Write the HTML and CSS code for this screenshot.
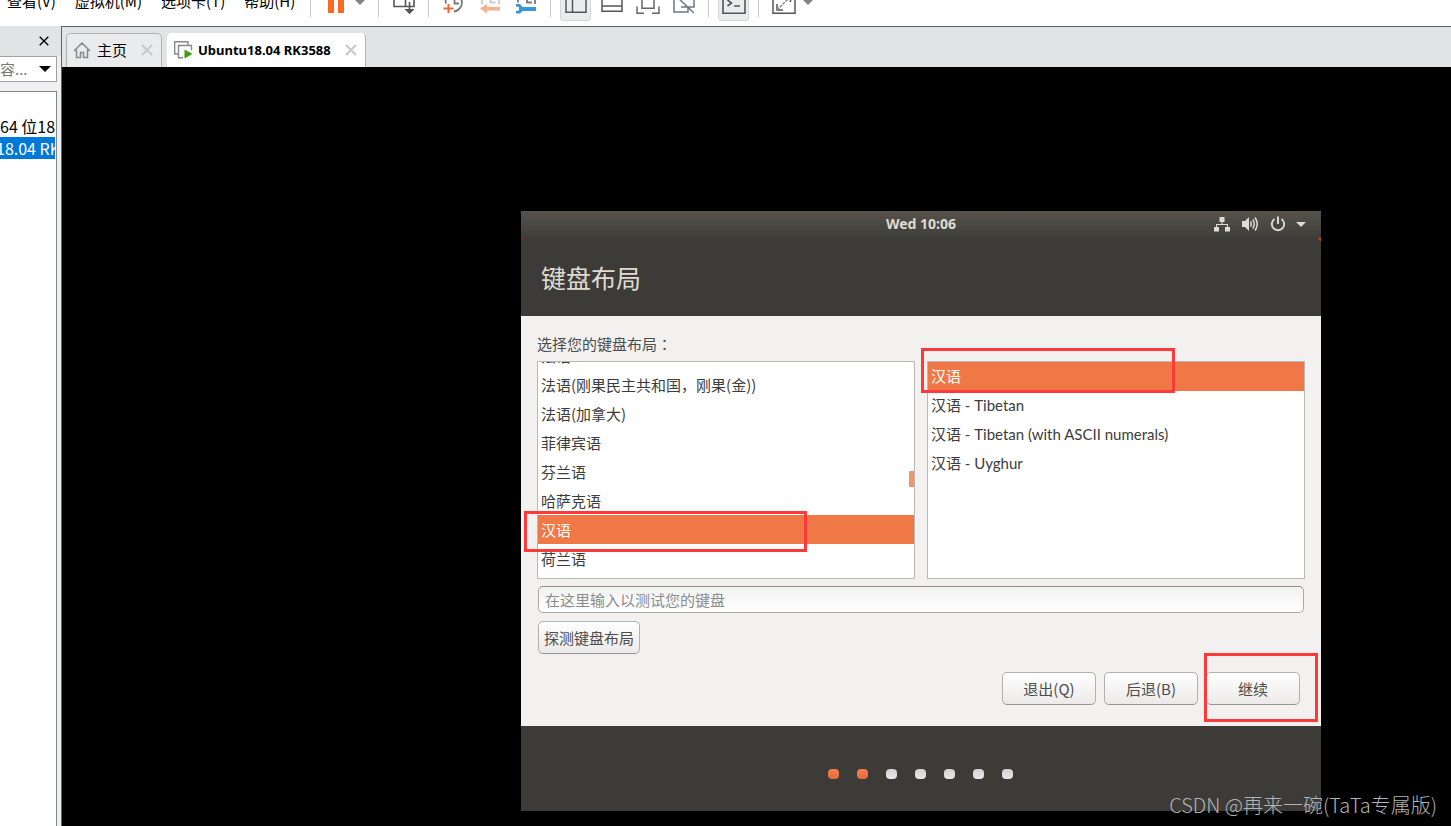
FILE: index.html
```html
<!DOCTYPE html>
<html lang="zh-CN">
<head>
<meta charset="utf-8">
<meta name="viewport" content="width=device-width, initial-scale=1">
<title>Ubuntu18.04 RK3588</title>
<link rel="stylesheet" href="styles.css">
</head>
<body>
<header class="toolbar">
  <nav class="menu" aria-label="菜单">
    <button type="button">查看(V)</button>
    <button type="button">虚拟机(M)</button>
    <button type="button">选项卡(T)</button>
    <button type="button">帮助(H)</button>
  </nav>
  <span class="sep"></span>
  <button class="tool" type="button" aria-label="挂起">
    <svg viewBox="0 0 24 24" fill="#fb6a22"><path d="M4 2h6v20H4zM14 2h6v20h-6z"/></svg>
  </button>
  <button class="caret" type="button" aria-label="电源选项">
    <svg viewBox="0 0 12 12" fill="#858585"><path d="M1 3h10L6 8z"/></svg>
  </button>
  <span class="sep"></span>
  <button class="tool" type="button" aria-label="发送组合键">
    <svg viewBox="0 0 24 24" fill="none" stroke="#55565a" stroke-width="1.6"><path d="M2 2v13.500h20V2M13.500 2v13.500M17.500 11v10"/><path d="M12.500 18h10L17.500 23.200z" fill="#55565a" stroke="none"/></svg>
  </button>
  <span class="sep"></span>
  <button class="tool" type="button" aria-label="拍摄快照">
    <svg viewBox="0 0 24 24" fill="none" stroke="#77787a" stroke-width="1.800"><path d="M6 4a9 9 0 1 1 6 16.500M4 12.500C3.500 11 3.800 8 5 6M12.500 7v5.500H17"/><path d="M1.500 17.500h10M6.500 13v9" stroke="#ee6a35" stroke-width="2"/></svg>
  </button>
  <button class="tool" type="button" aria-label="恢复快照">
    <svg viewBox="0 0 24 24" fill="none" stroke="#cbcbcb" stroke-width="1.800"><path d="M4 13V6M21 13V6M12.500 7v4.500h5"/><path d="M2 17.500l7-4.500v3h13v3.500H9v3z" fill="#fbb08c" stroke="none"/></svg>
  </button>
  <button class="tool" type="button" aria-label="管理快照">
    <svg viewBox="0 0 24 24" fill="none" stroke="#77787a" stroke-width="1.800"><path d="M4 11.500V6M21 13V6M13 7v4.500h5"/><path d="M2 13h4l2.500 3H22v4H8.500L6 22.500H2V20l3-.5v-3.500l-3-.5z" fill="#3598d8" stroke="none"/></svg>
  </button>
  <span class="sep"></span>
  <button class="tool tool-on" type="button" aria-label="显示库" aria-pressed="true">
    <svg viewBox="0 0 24 24" fill="none" stroke="#55565a" stroke-width="1.500"><path d="M2 2v19.300h20V2M8.500 2v19"/></svg>
  </button>
  <button class="tool" type="button" aria-label="缩略图栏">
    <svg viewBox="0 0 24 24" fill="none" stroke="#55565a" stroke-width="1.500"><path d="M2 2v18.300h20V2M2 15h20"/></svg>
  </button>
  <button class="tool" type="button" aria-label="全屏">
    <svg viewBox="0 0 24 24" fill="none" stroke="#66676b" stroke-width="1.500"><path d="M1 15.500v6.800h7M16 22.300h7v-6.800M6 2v15.300h12V2"/></svg>
  </button>
  <button class="tool" type="button" aria-label="Unity">
    <svg viewBox="0 0 24 24" fill="none" stroke="#6b7885" stroke-width="1.500"><path d="M2 2v19h14v-5M9 16h13V5M3 4l19 18"/></svg>
  </button>
  <span class="sep"></span>
  <button class="tool tool-on" type="button" aria-label="控制台" aria-pressed="true">
    <svg viewBox="0 0 24 24" fill="none" stroke="#55565a" stroke-width="1.600"><path d="M1 2v20.300h22V2M5.500 9l4 3-4 3M12 15h6"/></svg>
  </button>
  <span class="sep"></span>
  <button class="tool" type="button" aria-label="自由拉伸">
    <svg viewBox="0 0 24 24" fill="none" stroke="#55565a" stroke-width="1.500"><path d="M1 2v20.300h22V2M5 13v6h6"/><path d="M5 19L17 7" stroke="#8a8a8a" stroke-dasharray="3 1"/><path d="M15 6.500h3.500V11"/></svg>
  </button>
  <button class="caret" type="button" aria-label="拉伸选项">
    <svg viewBox="0 0 12 12" fill="#858585"><path d="M1 3h10L6 8z"/></svg>
  </button>
</header>
<div class="workspace">
  <aside class="sidebar">
    <div class="side-head">
      <button type="button" aria-label="关闭库">
        <svg viewBox="0 0 10 10" stroke="#000" stroke-width="1.400"><path d="M.7.7l8.600 8.600M9.300.7L.7 9.300"/></svg>
      </button>
    </div>
    <div class="search">
      <select aria-label="在此处键入内容"><option>容...</option></select>
      <svg viewBox="0 0 12 6"><path d="M0 0h12L6 6z"/></svg>
    </div>
    <ul class="library">
      <li>64 位18</li>
      <li class="current">18.04 RK</li>
    </ul>
  </aside>
  <main class="main">
    <div class="tabs">
      <div class="tab">
        <svg class="tab-icon" viewBox="0 0 18 18" fill="none" stroke="#88898c" stroke-width="1.500"><path d="M1 10L9 2l8 8M3.500 8.500v8h4v-5h3v5h4v-8"/></svg>
        <a href="#home">主页</a>
        <button type="button" aria-label="关闭主页"><svg viewBox="0 0 12 12" stroke="#c6c7c9" stroke-width="1.900"><path d="M1 1l10 10M11 1L1 11"/></svg></button>
      </div>
      <div class="tab tab-on">
        <svg class="tab-icon" viewBox="0 0 18 18" fill="none" stroke="#88898c" stroke-width="1.400"><path d="M4 13H.7V.7H14V4"/><path d="M9 16.800H4.500V4.500h13V9"/><path d="M10.500 8.500l8 4.500-8 4.500z" fill="#419b12" stroke="none"/></svg>
        <a href="#vm">Ubuntu18.04 RK3588</a>
        <button type="button" aria-label="关闭虚拟机"><svg viewBox="0 0 12 12" stroke="#c6c7c9" stroke-width="1.900"><path d="M1 1l10 10M11 1L1 11"/></svg></button>
      </div>
    </div>
    <div class="stage">
      <section class="vm">
        <div class="topbar">
          <span></span>
          <time>Wed 10:06</time>
          <div class="status">
            <svg viewBox="0 0 16 16" fill="#dfdbd2"><path d="M5.500 1h5v5h-2v2H14v3h2v4.500h-5V11h2V9H3v2h2v4.500H0V11h2V8h5.500V6h-2z"/></svg>
            <svg viewBox="0 0 16 16" fill="none" stroke="#dfdbd2" stroke-width="1.500"><path d="M0 5h3l4-4v14l-4-4H0z" fill="#dfdbd2" stroke="none"/><path d="M8.500 5.500q1.500 2.500 0 5M10.800 3.500q3 4.500 0 9M13 1.500q4.500 6.500 0 13"/></svg>
            <svg viewBox="0 0 16 16" fill="none" stroke="#dfdbd2" stroke-width="1.900"><path d="M8 .5V8M4.500 3a6.200 6.200 0 1 0 7 0"/></svg>
            <svg class="small" viewBox="0 0 10 16" fill="#dfdbd2"><path d="M0 6h10l-5 5z"/></svg>
          </div>
        </div>
        <div class="title"><h1>键盘布局</h1></div>
        <form class="installer">
          <p class="prompt">选择您的键盘布局<span class="colon" lang="zh-TW">：</span></p>
          <div class="lists">
            <div class="pane">
              <ul class="list scrolled" role="listbox" aria-label="键盘布局">
                <li role="option">法语</li>
                <li role="option">法语(刚果民主共和国，刚果(金))</li>
                <li role="option">法语(加拿大)</li>
                <li role="option">菲律宾语</li>
                <li role="option">芬兰语</li>
                <li role="option">哈萨克语</li>
                <li role="option" class="chosen" aria-selected="true">汉语</li>
                <li role="option">荷兰语</li>
              </ul>
              <span class="thumb"></span>
              <span class="mark mark-layout"></span>
            </div>
            <div class="pane">
              <ul class="list variants" role="listbox" aria-label="键盘变体">
                <li role="option" class="chosen" aria-selected="true">汉语</li>
                <li role="option">汉语 - Tibetan</li>
                <li role="option">汉语 - Tibetan (with ASCII numerals)</li>
                <li role="option">汉语 - Uyghur</li>
              </ul>
              <span class="mark mark-variant"></span>
            </div>
          </div>
          <input class="tester" type="text" aria-label="测试键盘" placeholder="在这里输入以测试您的键盘">
          <button class="btn detect" type="button">探测键盘布局</button>
          <div class="actions">
            <button class="btn" type="button">退出(Q)</button>
            <button class="btn" type="button">后退(B)</button>
            <div class="next">
              <button class="btn" type="button">继续</button>
              <span class="mark mark-next"></span>
            </div>
          </div>
        </form>
        <div class="steps">
          <i class="done"></i><i class="done"></i><i></i><i></i><i></i><i></i><i></i>
        </div>
      </section>
    </div>
  </main>
</div>
<div class="watermark">CSDN @再来一碗(TaTa专属版)</div>
</body>
</html>
```
FILE: styles.css
```css
* { box-sizing: border-box; }

body {
  margin: 0;
  height: 100vh;
  display: flex;
  flex-direction: column;
  overflow: hidden;
  background: #fff;
  color: #000;
  font: 15px/20px "Noto Sans CJK SC", sans-serif;
}

button, input, select { font: inherit; color: inherit; }
button { padding: 0; border: 0; background: none; }
ul { margin: 0; padding: 0; list-style: none; }
a { color: inherit; text-decoration: none; }
svg { display: block; flex: none; }

/* Toolbar: scrolled partly above the window edge */
.toolbar {
  flex: none;
  height: 26px;
  display: flex;
  align-items: flex-end;
  padding-bottom: 5px;
}
.menu {
  display: flex;
  gap: 19px;
  min-width: 301px;
  padding: 0 0 10px 7px;
  white-space: nowrap;
}
.sep {
  width: 1px;
  height: 32px;
  margin: 0 9px 4px;
  background: #c9c9c9;
}
.tool {
  flex: none;
  display: grid;
  place-items: center;
  width: 31px;
  height: 36px;
  border: 1px solid transparent;
  border-radius: 3px;
}
.tool + .tool { margin-left: 5px; }
.tool svg { width: 24px; height: 24px; }
.tool-on { background: #ebecee; border-color: #d6d7d9; }
.caret {
  flex: none;
  display: grid;
  place-items: center;
  width: 18px;
  height: 36px;
}
.caret svg { width: 12px; height: 12px; }

.workspace { flex: 1; display: flex; min-height: 0; }

/* Library sidebar */
.sidebar {
  flex: none;
  width: 61px;
  display: flex;
  flex-direction: column;
  padding-right: 4px;
  background: #f0f0f0;
}
.side-head {
  height: 30px;
  margin-right: -4px;
  padding-right: 12px;
  display: flex;
  align-items: center;
  justify-content: flex-end;
  background: #e2e3e5;
}
.side-head svg { width: 10px; height: 10px; }
.search {
  height: 26px;
  display: flex;
  align-items: center;
  padding-right: 5px;
  border: 1px solid #a0a2a6;
  border-left: 0;
  background: #fff;
}
.search select {
  flex: 1;
  min-width: 0;
  appearance: none;
  padding: 0;
  border: 0;
  background: none;
  color: #7a7a7a;
}
.search svg { width: 12px; height: 6px; }
.library {
  flex: 1;
  margin-top: 9px;
  padding: 23px 1px 0 0;
  border: solid #82858c;
  border-width: 1px 1px 0 0;
  background: #fff;
  font-size: 16px;
}
.library li {
  height: 22px;
  line-height: 22px;
  overflow: hidden;
  white-space: nowrap;
}
.library .current { background: #0078d7; color: #fff; text-indent: -4px; }

/* Tabs */
.main {
  flex: 1;
  min-width: 0;
  display: flex;
  flex-direction: column;
  border: solid #5f6266;
  border-width: 1px 0 0 1px;
}
.tabs {
  flex: none;
  height: 40px;
  display: flex;
  align-items: flex-end;
  gap: 5px;
  padding-left: 4px;
  background: #e2e3e5;
}
.tab {
  height: 34px;
  display: flex;
  align-items: center;
  padding: 0 8px 2px 6px;
  border: 1px solid #aeb0b3;
  border-bottom: 0;
  border-radius: 5px 5px 0 0;
  background: #e9ebed;
}
.tab-on {
  border-color: #fff #aeb0b3 #fff #fff;
  background: #fff;
  font: bold 13px/20px "Noto Sans", sans-serif;
}
.tab-icon { width: 18px; height: 18px; margin-right: 6px; overflow: visible; }
.tab button { margin-left: 14px; }
.tab button svg { width: 12px; height: 12px; }

/* Guest display */
.stage {
  flex: 1;
  min-height: 0;
  display: flex;
  justify-content: flex-end;
  align-items: flex-start;
  padding: 144px 130px 0 0;
  background: #000;
}
.vm {
  flex: 0 1 800px;
  background: #3c3b37;
  color: #3c3c3c;
}
.topbar {
  height: 27px;
  display: grid;
  grid-template-columns: 1fr auto 1fr;
  align-items: center;
  padding: 0 15px 2px;
  background: linear-gradient(#56534b, #3e3d39);
  color: #dfdbd2;
  font: bold 14px/20px "Noto Sans", sans-serif;
}
.status { display: flex; justify-content: flex-end; gap: 12px; }
.status svg { width: 16px; height: 16px; }
.status .small { width: 10px; margin-left: -2px; }
.title {
  padding: 22px 20px;
  background:
    linear-gradient(45deg, transparent 50%, #c8420f 50%) top right / 4px 4px no-repeat,
    linear-gradient(-45deg, transparent 50%, #8b1a2b 50%) top left / 3px 3px no-repeat;
}
.title h1 {
  margin: 0;
  color: #dfdbd2;
  font-size: 25px;
  font-weight: 400;
  line-height: 34px;
}
.installer {
  display: flex;
  flex-direction: column;
  padding: 18px 16px 21px;
  background: #f2f1f0;
}
.prompt { margin: 0 0 7px; color: #4c4c4c; line-height: 20px; }
.colon { font-family: "Noto Sans CJK TC", sans-serif; }
.lists { display: grid; grid-template-columns: 1fr 1fr; gap: 12px; }
.pane { position: relative; }
.list {
  height: 218px;
  overflow: hidden;
  border: 1px solid #bab8b5;
  background: #fff;
}
.list li { padding: 0 3px; line-height: 29px; }
.variants { font-family: Lato, "Noto Sans CJK SC", sans-serif; }
.scrolled li:first-child { margin-top: -21px; }
.list .chosen { background: #f07746; color: #fff; }
.thumb {
  position: absolute;
  top: 110px;
  right: 1px;
  width: 5px;
  height: 16px;
  border-radius: 1px 0 0 1px;
  background: #f5946c;
}
.mark { position: absolute; border: 3px solid #fc3a3a; pointer-events: none; }
.mark-layout { top: 150px; left: -13px; width: 283px; height: 41px; }
.mark-variant { top: -13px; left: -6px; width: 254px; height: 45px; }
.mark-next { top: -19px; left: -2px; width: 114px; height: 69px; }

.tester {
  height: 27px;
  margin: 7px 1px 8px;
  padding: 0 6px;
  border: 1px solid #a9a9a7;
  border-top-color: #8f8f8d;
  border-radius: 5px;
  background: linear-gradient(#f2f2f2, #fff);
}
.tester::placeholder { color: #8c8c8c; opacity: 1; }
.btn {
  width: 94px;
  height: 33px;
  border: 1px solid #b2b1af;
  border-bottom-color: #979694;
  border-radius: 5px;
  background: linear-gradient(#fff, #ebeae9);
  color: #4c4c4c;
}
.detect { width: 102px; margin-left: 1px; }
.actions {
  display: flex;
  justify-content: flex-end;
  gap: 8px;
  margin-top: 18px;
  padding-right: 5px;
}
.next { position: relative; }
.steps {
  height: 85px;
  display: flex;
  justify-content: center;
  align-items: center;
  gap: 18px;
  padding: 11px 2px 0 0;
}
.steps i {
  width: 11px;
  height: 10px;
  border-radius: 4px;
  background: linear-gradient(#d2d2d2, #e8e8e8);
}
.steps .done { background: linear-gradient(#f98051, #e56a38); }

.watermark {
  position: absolute;
  right: 14px;
  bottom: 6px;
  color: #b4b4b4;
  font-size: 20px;
  font-weight: 300;
  line-height: 30px;
}
```
